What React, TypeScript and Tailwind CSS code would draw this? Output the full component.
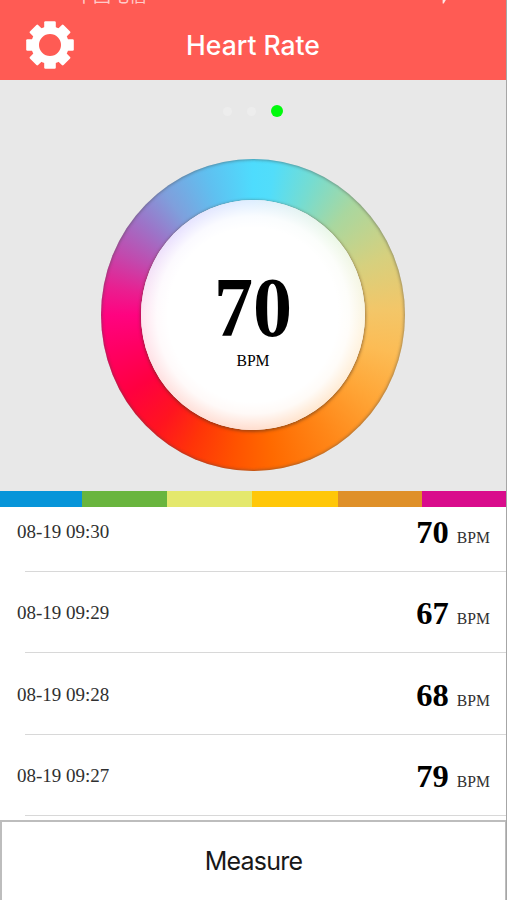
import React from 'react'

type Reading = { time: string; bpm: number }

const readings: Reading[] = [
  { time: '08-19 09:30', bpm: 70 },
  { time: '08-19 09:29', bpm: 67 },
  { time: '08-19 09:28', bpm: 68 },
  { time: '08-19 09:27', bpm: 79 },
]

const TEETH = [0, 45, 90, 135, 180, 225, 270, 315]

function GearIcon() {
  return (
    <svg width="48" height="48" viewBox="0 0 48 48" fill="#fff" aria-hidden="true">
      <circle cx="24" cy="24" r="14.9" fill="none" stroke="#fff" strokeWidth="7.8" />
      {TEETH.map((deg) => (
        <rect key={deg} x="18.2" y="0.2" width="11.6" height="9" rx="1.2" transform={`rotate(${deg} 24 24)`} />
      ))}
    </svg>
  )
}

function Header() {
  return (
    <header className="relative h-[80px] shrink-0 overflow-hidden bg-[#ff5b54] text-white">
      {/* status bar, scrolled almost out of view */}
      <div className="absolute -top-[16px] left-[75px] font-['Noto_Sans_CJK_SC',sans-serif] text-[18px] leading-[20px] text-white/70">
        中国电信
      </div>
      <svg className="absolute left-[441px] top-0" width="6" height="5" viewBox="0 0 6 5" aria-hidden="true">
        <path d="M1.6 0h3.2L2.8 3.6H1.6z" fill="#fff" fillOpacity="0.85" />
      </svg>
      <div className="grid h-full grid-cols-[1fr_auto_1fr] items-center pt-[9px]">
        <button type="button" aria-label="Settings" className="ml-[25.5px] w-12">
          <GearIcon />
        </button>
        <h1 className="font-['Inter',sans-serif] text-[26.5px] font-medium leading-8">Heart Rate</h1>
      </div>
    </header>
  )
}

function Dial({ bpm }: { bpm: number }) {
  return (
    <div className="mt-[42px] grid h-[312px] w-[304px] place-items-center rounded-[50%] bg-[conic-gradient(#4edcfd_0deg,#52ddfa_8deg,#76dcd0_24deg,#a9d79f_42deg,#d6d07e_66deg,#f3c668_88deg,#fcbc55_105deg,#ffa637_125deg,#ff8718_148deg,#ff6a00_172deg,#ff5200_188deg,#ff3408_205deg,#ff1420_220deg,#ff0040_238deg,#ff0064_256deg,#ff0380_270deg,#e91f90_281deg,#c14aae_295deg,#9c74c8_310deg,#7f9fdc_324deg,#5fc0f0_342deg,#4edcfd_360deg)] shadow-[inset_0_0_3px_1px_rgba(70,70,70,0.45)]">
      <div className="relative h-[230px] w-[224px] rounded-[50%] bg-white shadow-[0_1px_3px_1px_rgba(80,50,30,0.5)]">
        {/* soft tint bleeding inward from the ring */}
        <div className="absolute inset-0 rounded-[50%] bg-[conic-gradient(#d9ecff,#e8f7e4_45deg,#fff3dd_100deg,#ffe3c8_150deg,#ffd9c8_180deg,#ffdcd8_225deg,#ffe0ee_270deg,#e6dcff_315deg,#d9ecff)]" />
        <div className="absolute inset-0 rounded-[50%] bg-[radial-gradient(closest-side,#fff_76%,rgba(255,255,255,0.85)_86%,rgba(255,255,255,0.1)_100%)]" />
        <div className="relative flex h-full flex-col items-center font-['Liberation_Serif',serif] text-black">
          <span className="mt-[66px] block h-[84px] w-[79px]">
            <span className="block w-[84px] origin-left scale-x-[0.93] text-[84px] font-bold leading-[84px]">{bpm}</span>
          </span>
          <span className="mt-px text-[15.7px] leading-5">BPM</span>
        </div>
      </div>
    </div>
  )
}

function ScaleBar() {
  return (
    <div className="grid h-4 shrink-0 grid-cols-[82px_85px_85px_86px_84px_1fr]">
      <div className="bg-[#0795d9]" />
      <div className="bg-[#69b53e]" />
      <div className="bg-[#e4e86d]" />
      <div className="bg-[#ffc709]" />
      <div className="bg-[#df9029]" />
      <div className="bg-[#d90c8c]" />
    </div>
  )
}

function ReadingRow({ time, bpm }: Reading) {
  return (
    <li className="relative flex h-[81.4px] items-center justify-between pl-[17px] pr-4 pt-px font-['Liberation_Serif',serif]">
      <span className="text-[19px] leading-6 text-[#303030]">{time}</span>
      <span className="flex items-baseline gap-2">
        <span className="text-[32.5px] font-bold leading-9 text-black">{bpm}</span>
        <span className="text-[15.7px] text-[#303030]">BPM</span>
      </span>
      <span className="absolute bottom-0 left-[25px] right-0 h-px bg-[#d8d8d8]" />
    </li>
  )
}

export default function App() {
  return (
    <div className="flex h-[900px] w-[507px] flex-col overflow-hidden border-r border-[#a6a6a6] bg-white">
      <Header />
      <section className="flex h-[411px] shrink-0 flex-col items-center bg-[#e8e8e8] pt-[25px]">
        <div className="flex h-3 items-center gap-[15px]">
          <span className="size-[9px] rounded-full bg-[#ededed]" />
          <span className="size-[9px] rounded-full bg-[#ededed]" />
          <span className="size-[11.5px] rounded-full bg-[#00fa0c]" />
        </div>
        <Dial bpm={70} />
      </section>
      <ScaleBar />
      <div className="h-[313px] shrink-0 overflow-hidden">
        <ul className="-mt-[16.3px]">
          {readings.map((r) => (
            <ReadingRow key={r.time} {...r} />
          ))}
        </ul>
      </div>
      <button
        type="button"
        className="flex flex-1 items-center justify-center border-l-2 border-r border-t-2 border-[#bdbdbd] bg-white pt-px font-['Inter',sans-serif] text-[25px] tracking-[-0.8px] text-[#181818]"
      >
        Measure
      </button>
    </div>
  )
}
